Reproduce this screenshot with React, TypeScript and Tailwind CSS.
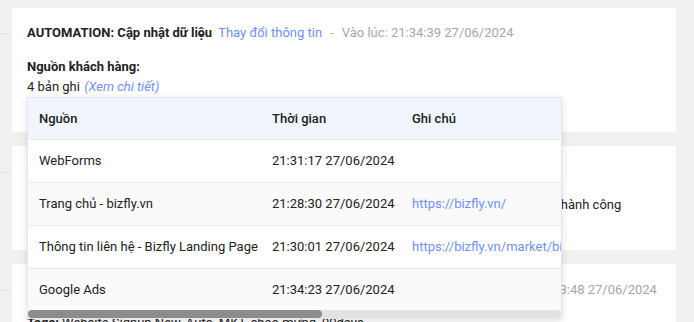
import React from 'react';

const rows = [
  { source: 'WebForms', time: '21:31:17 27/06/2024', note: '' },
  { source: 'Trang chủ - bizfly.vn', time: '21:28:30 27/06/2024', note: 'https://bizfly.vn/' },
  { source: 'Thông tin liên hệ - Bizfly Landing Page', time: '21:30:01 27/06/2024', note: 'https://bizfly.vn/market/bizfly-landing-page/thong-tin-lien-he' },
  { source: 'Google Ads', time: '21:34:23 27/06/2024', note: '' },
];

const Connector: React.FC<{ top: string }> = ({ top }) => (
  <div className={`w-[12px] shrink-0 ${top}`}>
    <div className="h-px bg-[#e2e2e2]" />
  </div>
);

export default function App() {
  return (
    <div
      className="bg-[#f0f0f0] pt-[8px] pr-[18px] text-[13px] text-[#222] overflow-hidden h-[322px]"
      style={{ fontFamily: 'Roboto, "Noto Sans", sans-serif' }}
    >
      <div className="flex flex-col gap-[14px]">
        {/* Card 1 */}
        <div className="flex">
          <Connector top="pt-[25px]" />
          <div className="relative flex-1 bg-white h-[124px] px-[15px] pt-[15px]">
            <div className="flex items-center leading-[20px] whitespace-nowrap">
              <span className="font-bold">AUTOMATION: Cập nhật dữ liệu</span>
              <span className="ml-[6px] text-[#6f8ff5]">Thay đổi thông tin</span>
              <span className="ml-[8px] text-[#a6a6a6]">-</span>
              <span className="ml-[8px] text-[#a6a6a6]">Vào lúc: 21:34:39 27/06/2024</span>
            </div>
            <div className="mt-[14px] font-bold leading-[20px]">Nguồn khách hàng:</div>
            <div className="leading-[20px]">
              4 bản ghi <span className="italic text-[#6f8ff5] ml-[1px]">(Xem chi tiết)</span>
            </div>

            {/* Popover table */}
            <div className="absolute z-10 left-[15px] top-[89px] w-[535px] bg-white border border-[#e4e4e4] shadow-[0_2px_8px_rgba(0,0,0,0.12)]">
              <div className="overflow-hidden">
                <table className="w-[970px] border-collapse text-left whitespace-nowrap">
                  <thead>
                    <tr className="bg-[#f0f5fe] h-[41px] border-b border-[#e9e9e9]">
                      <th className="w-[233px] pl-[11px] font-medium">Nguồn</th>
                      <th className="w-[140px] pl-[11px] font-medium">Thời gian</th>
                      <th className="pl-[11px] font-medium">Ghi chú</th>
                    </tr>
                  </thead>
                  <tbody>
                    {rows.map((r, i) => (
                      <tr
                        key={r.source}
                        className={`h-[43px] last:h-[42px] border-b border-[#e9e9e9] last:border-b-0 ${i % 2 === 1 ? 'bg-[#fafafa]' : 'bg-white'}`}
                      >
                        <td className="pl-[11px]">{r.source}</td>
                        <td className="pl-[11px]">{r.time}</td>
                        <td className="pl-[11px] text-[#6f8ff5]">{r.note}</td>
                      </tr>
                    ))}
                  </tbody>
                </table>
              </div>
              {/* horizontal scrollbar */}
              <div className="h-[8px] bg-[#e2e2e2] rounded-full">
                <div className="h-full w-[294px] bg-[#8c8c8c] rounded-full" />
              </div>
            </div>
          </div>
        </div>

        {/* Card 2 */}
        <div className="flex">
          <Connector top="pt-[26px]" />
          <div className="flex-1 bg-white h-[104px] px-[15px] pt-[15px] whitespace-nowrap">
            <div className="leading-[20px]">
              <span className="font-bold">AUTOMATION: Gửi email</span>
              <span className="ml-[6px] text-[#6f8ff5]">Gửi email chào mừng</span>
              <span className="ml-[8px] text-[#a6a6a6]">-</span>
              <span className="ml-[8px] text-[#a6a6a6]">Vào lúc: 21:33:50 27/06/2024</span>
            </div>
            <div className="mt-[14px] leading-[20px]">
              Kết quả: Đã gửi email chào mừng tới khách hàng nguyen.van.an@gmail.com qua Bizfly Mail thành công
            </div>
          </div>
        </div>

        {/* Card 3 */}
        <div className="flex">
          <Connector top="pt-[26px]" />
          <div className="flex-1 bg-white h-[100px] px-[15px] pt-[16px] whitespace-nowrap">
            <div className="leading-[20px]">
              <span className="font-bold">AUTOMATION: Gắn tag cho khách hàng</span>
              <span className="ml-[6px] text-[#6f8ff5]">Gắn tag chào mừng tới khách hàng</span>
              <span className="ml-[8px] text-[#a6a6a6]">-</span>
              <span className="ml-[8px] text-[#a6a6a6]">Vào lúc: 21:33:48 27/06/2024</span>
            </div>
            <div className="mt-[13px] leading-[20px]">
              <span className="font-bold">Tags:</span> Website Signup New, Auto_MKT, chào mừng_90days
            </div>
          </div>
        </div>
      </div>
    </div>
  );
}
